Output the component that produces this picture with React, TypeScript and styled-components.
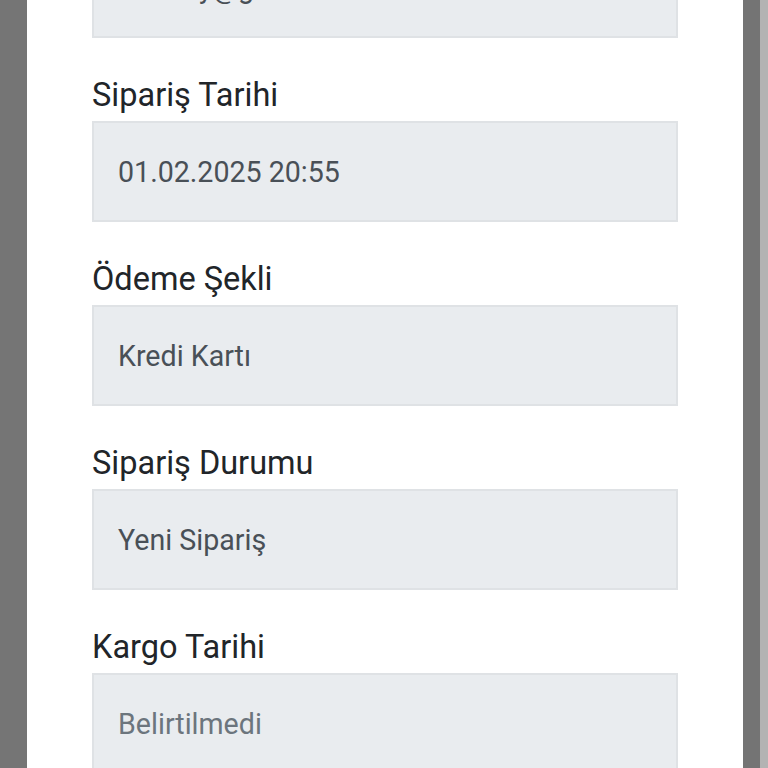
import styled, { createGlobalStyle } from 'styled-components'

const GlobalStyle = createGlobalStyle`
  html, body {
    margin: 0;
    padding: 0;
    height: 100%;
    overflow: hidden;
    background: #757575;
  }
  body {
    font-family: Roboto, "Noto Sans", "Liberation Sans", sans-serif;
  }
`

const Screen = styled.div`
  display: flex;
  height: 768px;
  padding-left: 27px;
  box-sizing: border-box;
`

const Sheet = styled.div`
  width: 716px;
  height: 768px;
  background: #ffffff;
  overflow: hidden;
`

// scrolled down: the e-mail field sits mostly above the fold
const Content = styled.div`
  display: flex;
  flex-direction: column;
  padding: 0 65px;
  margin-top: -146px;
`

const Scrollbar = styled.div`
  width: 17px;
  height: 768px;
  background: #747474;
`

const Track = styled.div`
  width: 8px;
  height: 768px;
  background: #b3b3b3;
`

const Field = styled.div`
  display: flex;
  flex-direction: column;
`

const Label = styled.label`
  font-size: 32.5px;
  line-height: 38px;
  color: #212529;
  margin-top: 38px;
  margin-bottom: 7px;
`

const Value = styled.div<{ $empty?: boolean }>`
  height: 101px;
  box-sizing: border-box;
  display: flex;
  align-items: center;
  padding: 0 24px;
  background: #e9ecef;
  border: 2px solid #dfe2e5;
  font-size: 28.6px;
  color: ${(p) => (p.$empty ? '#6c757d' : '#495057')};
`

const fields = [
  { label: 'E-posta', value: 'ahmety@gmail.com' },
  { label: 'Sipariş Tarihi', value: '01.02.2025 20:55' },
  { label: 'Ödeme Şekli', value: 'Kredi Kartı' },
  { label: 'Sipariş Durumu', value: 'Yeni Sipariş' },
  { label: 'Kargo Tarihi', value: '' },
]

export default function App() {
  return (
    <>
      <GlobalStyle />
      <Screen>
        <Sheet>
          <Content>
            {fields.map((f) => (
              <Field key={f.label}>
                <Label>{f.label}</Label>
                <Value $empty={!f.value}>{f.value || 'Belirtilmedi'}</Value>
              </Field>
            ))}
          </Content>
        </Sheet>
        <Scrollbar />
        <Track />
      </Screen>
    </>
  )
}
